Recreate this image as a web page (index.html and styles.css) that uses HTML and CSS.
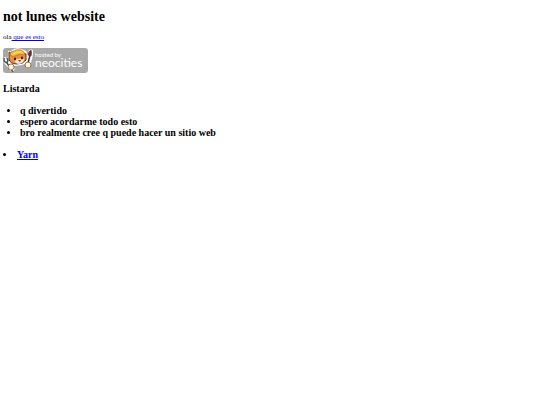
FILE: index.html
```html
<!DOCTYPE html>
<html lang="es">
<head>
  <meta charset="utf-8">
  <title>not lunes website</title>
  <link rel="stylesheet" href="styles.css">
</head>

<body>
  <h1>not lunes website</h1>
  <p>ola<a href="#"> que es esto</a></p>

  <a class="hosted" href="#" aria-label="hosted by neocities">
    <svg class="cat" viewBox="0 0 30 25" aria-hidden="true">
      <!-- white outline -->
      <path d="M5 8 L5 3 L8 3 Q12 -1 18 1 L23 3 L25 8 Q25 16 19 17 L12 18 Q4 16 4 11 Z" fill="#fff"/>
      <path d="M2 12 L9 21 M28 4 L25 17" fill="none" stroke="#fff" stroke-width="5" stroke-linecap="round"/>
      <!-- head and ears -->
      <path d="M6 10 L6 4 L10 6 L20 5 L23 6 L23 12 Q20 16 14 16 Q7 16 6 11 Z" fill="#ee8f3c" stroke="#55301c" stroke-width="1"/>
      <path d="M12 12 Q16 10 21 11 Q21 15 16 16 Q11 15 12 12 Z" fill="#ffe6cf"/>
      <ellipse cx="12" cy="11" rx="1" ry="1.4" fill="#241a18"/>
      <ellipse cx="19" cy="10" rx="1" ry="1.4" fill="#241a18"/>
      <path d="M15 12 L18 12 L17 14 Z" fill="#a4262b"/>
      <!-- helmet -->
      <path d="M7 7 Q7 3 11 3 Q14 1 18 2 Q22 4 22 7 Q16 5 12 8 Q9 9 7 7 Z" fill="#f6bd3f" stroke="#b97722" stroke-width="0.8"/>
      <path d="M10 6 Q14 3 19 4" fill="none" stroke="#ffe084"/>
      <!-- wrench -->
      <path d="M1 10 L1 13 L4 15 L5 12 L4 10 M4 15 L10 24" fill="none" stroke="#4b5055" stroke-width="1.5"/>
      <!-- brush -->
      <path d="M27 7 L24 19" fill="none" stroke="#4b3129" stroke-width="1.5"/>
      <path d="M25 7 Q25 4 28 2 Q29 5 28 8 Z" fill="#842a2b" stroke="#3c2325" stroke-width="0.6"/>
      <!-- paws -->
      <circle cx="8" cy="19" r="3" fill="#fff6ea" stroke="#68462d" stroke-width="0.7"/>
      <circle cx="25" cy="17" r="3" fill="#fff6ea" stroke="#68462d" stroke-width="0.7"/>
      <path d="M6 21 Q8 23 10 21 M23 19 Q25 21 27 19" fill="none" stroke="#e3a23c"/>
    </svg>
    <span class="label">
      <span class="by">hosted by</span>
      <span class="name">neocities</span>
    </span>
  </a>

  <h3>Listarda</h3>
  <ul>
    <li>q divertido</li>
    <li>espero acordarme todo esto</li>
    <li>bro realmente cree q puede hacer un sitio web</li>
  </ul>
  <ul class="links">
    <li><a href="#">Yarn</a></li>
  </ul>
</body>
</html>
```

FILE: styles.css
```css
body {
  margin: 9px 3px;
  background-color: white;
  color: black;
  font-family: "Liberation Serif", "Times New Roman", serif;
  font-size: 10px;
}

h1 {
  margin: 0 0 8px;
  font-size: 14px;
  line-height: 16px;
}

p {
  margin: 0 0 7px;
  font-size: 7px;
  line-height: 8px;
}

a {
  color: #0000ee;
}

.hosted {
  display: flex;
  width: fit-content;
  padding-right: 6px;
  border-radius: 3px;
  background-color: #a8a8a8;
  color: white;
  font-family: "Liberation Sans Narrow", Lato, sans-serif;
  text-decoration: none;
}

.cat {
  width: 30px;
  height: 25px;
}

.label {
  display: flex;
  flex-direction: column;
  padding: 3px 0 0 2px;
}

.by {
  font-size: 6px;
  line-height: 8px;
}

.name {
  font-size: 12px;
  line-height: 8px;
}

h3 {
  margin: 10px 0;
  font-size: 10px;
  line-height: 12px;
}

ul {
  margin: 0 0 11px;
  padding-left: 17px;
  font-size: 10px;
  font-weight: bold;
  line-height: 11px;
}

.links {
  padding-left: 0;
  list-style-position: inside;
}
```
